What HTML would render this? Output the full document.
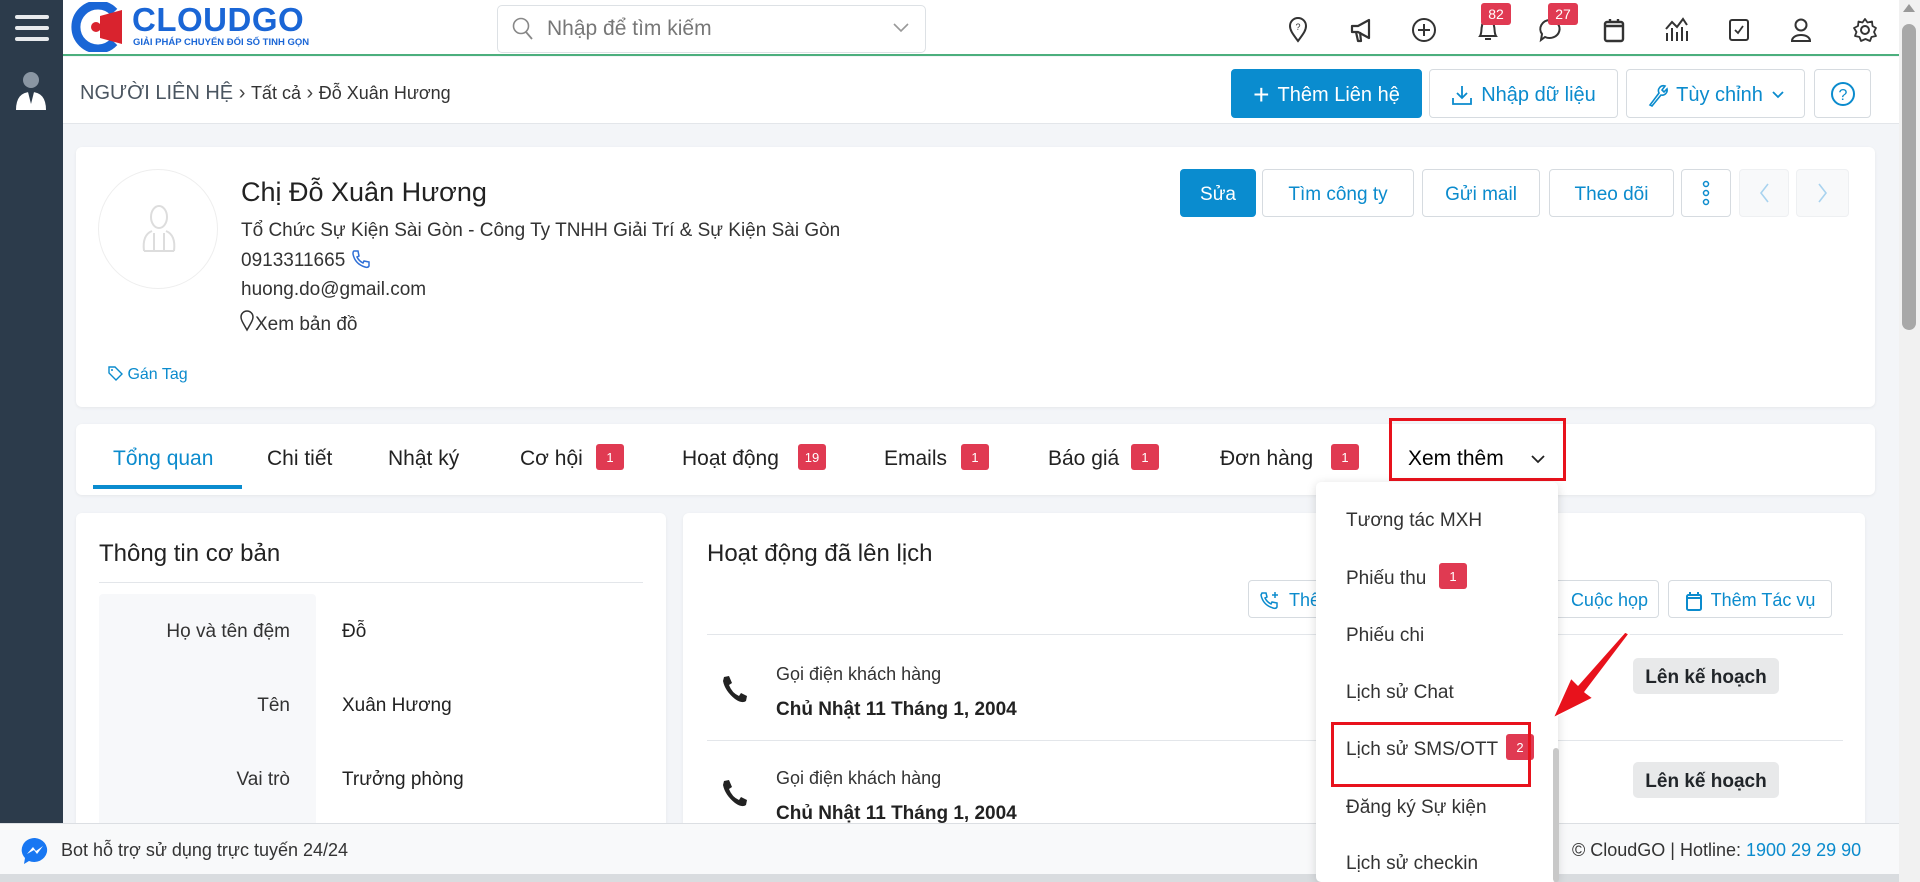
<!DOCTYPE html>
<html><head><meta charset="utf-8">
<style>
*{box-sizing:border-box;margin:0;padding:0}
body{width:1920px;height:882px;overflow:hidden;background:#f3f5f8;font-family:"Liberation Sans","Noto Sans CJK SC",sans-serif;color:#212529;position:relative}
.abs{position:absolute}
.side{left:0;top:0;width:63px;height:823px;background:#2c3b4b}
.hdr{left:63px;top:0;width:1836px;height:56px;background:#fff;border-bottom:2px solid #4caf7d}
.bc{left:63px;top:57px;width:1836px;height:67px;background:#fff;border-bottom:1px solid #e3e6ea}
.card{background:#fff;border-radius:6px;box-shadow:0 1px 3px rgba(0,0,0,.06)}
.btn{position:absolute;border:1px solid #d6dbe0;border-radius:4px;background:#fff;color:#0b8bcd;font-size:19px;display:flex;align-items:center;justify-content:center;gap:8px;padding-top:3px}
.btnp{background:#0a8ccf;color:#fff;border-color:#0a8ccf}
.badge{position:absolute;background:#e03a52;color:#fff;font-size:13px;border-radius:3px;width:28px;height:26px;display:flex;align-items:center;justify-content:center}
.tab{position:absolute;top:447px;font-size:21px;color:#222}
.ic{position:absolute;top:17px}
.dd{font-size:19px;color:#333;position:absolute;left:1346px}
</style></head><body>
<div class="abs side">
 <div class="abs" style="left:15px;top:15px;width:34px;height:4px;background:#e8eaed;border-radius:2px"></div>
 <div class="abs" style="left:15px;top:26px;width:34px;height:4px;background:#e8eaed;border-radius:2px"></div>
 <div class="abs" style="left:15px;top:37px;width:34px;height:4px;background:#e8eaed;border-radius:2px"></div>
 <svg class="abs" style="left:14px;top:70px" width="34" height="40" viewBox="0 0 34 40"><circle cx="17" cy="10" r="8" fill="#8a96a3"/><path d="M2 40 Q2 22 17 22 Q32 22 32 40Z" fill="#fff"/><path d="M14 22 L17 34 L20 22Z" fill="#2c3b4b"/></svg>
</div>
<div class="abs hdr"></div>
<!-- logo -->
<svg class="abs" style="left:70px;top:2px" width="56" height="50" viewBox="0 0 56 50"><path d="M44 10 A22 22 0 1 0 44 40" fill="none" stroke="#1a66d6" stroke-width="9"/><path d="M30 14 L52 8 L52 42 L30 36Z" fill="#d9232e"/><circle cx="26" cy="25" r="5" fill="#d9232e"/></svg>
<div class="abs" style="left:132px;top:1px;font-size:33px;font-weight:bold;color:#1a66d6;letter-spacing:0.5px">CLOUDGO</div>
<div class="abs" style="left:133px;top:37px;font-size:9.5px;font-weight:bold;color:#1a66d6">GIẢI PHÁP CHUYỂN ĐỔI SỐ TINH GỌN</div>
<!-- search -->
<div class="abs" style="left:497px;top:5px;width:429px;height:48px;border:1px solid #dde1e5;border-radius:5px;background:#fff"></div>
<svg class="abs" style="left:512px;top:17px" width="22" height="24" viewBox="0 0 22 24"><circle cx="9" cy="9" r="7.5" fill="none" stroke="#888" stroke-width="1.6"/><path d="M14 15 L20 22" stroke="#888" stroke-width="1.8"/></svg>
<div class="abs" style="left:547px;top:17px;font-size:21px;color:#777">Nhập để tìm kiếm</div>
<svg class="abs" style="left:892px;top:22px" width="18" height="12"><path d="M2 2 L9 9 L16 2" fill="none" stroke="#999" stroke-width="1.6"/></svg>
<!-- header icons -->
<svg class="ic" style="left:1286px" width="24" height="26" viewBox="0 0 24 26"><path d="M12 24 C6 16 4 13 4 9 A8 8 0 0 1 20 9 C20 13 18 16 12 24Z" fill="none" stroke="#333" stroke-width="2"/><text x="12" y="13" font-size="9" text-anchor="middle" fill="#333">?</text></svg>
<svg class="ic" style="left:1349px" width="26" height="26" viewBox="0 0 26 26"><path d="M3 9 H9 L20 3 V21 L9 15 H3Z M7 15 L9 24 H12 L11 15" fill="none" stroke="#333" stroke-width="2.2" stroke-linejoin="round"/></svg>
<svg class="ic" style="left:1411px" width="26" height="26" viewBox="0 0 26 26"><circle cx="13" cy="13" r="11" fill="none" stroke="#333" stroke-width="2"/><path d="M13 7 V19 M7 13 H19" stroke="#333" stroke-width="2"/></svg>
<svg class="ic" style="left:1475px" width="26" height="26" viewBox="0 0 26 26"><path d="M5 19 C7 16 6 12 7 9 A6 6 0 0 1 19 9 C20 12 19 16 21 19Z M10 22 H16" fill="none" stroke="#333" stroke-width="2"/></svg>
<svg class="ic" style="left:1537px" width="26" height="26" viewBox="0 0 26 26"><path d="M13 3 A10 9 0 1 1 8 20 L4 23 L5 17 A10 9 0 0 1 13 3Z" fill="none" stroke="#333" stroke-width="2"/></svg>
<svg class="ic" style="left:1602px" width="24" height="26" viewBox="0 0 24 26"><rect x="3" y="5" width="18" height="19" rx="2" fill="none" stroke="#333" stroke-width="2.4"/><path d="M3 9 H21 M8 2 V6 M16 2 V6" stroke="#333" stroke-width="2.4"/></svg>
<svg class="ic" style="left:1663px" width="26" height="26" viewBox="0 0 26 26"><path d="M3 12 L9 5 L14 10 L20 2 L24 8 M4 24 V16 M9 24 V11 M14 24 V15 M19 24 V10 M24 24 V14" fill="none" stroke="#333" stroke-width="2"/></svg>
<svg class="ic" style="left:1727px" width="24" height="26" viewBox="0 0 24 26"><rect x="3" y="3" width="18" height="20" rx="2" fill="none" stroke="#333" stroke-width="2"/><path d="M8 13 L11 16 L16 9" fill="none" stroke="#333" stroke-width="1.8"/></svg>
<svg class="ic" style="left:1789px" width="24" height="26" viewBox="0 0 24 26"><circle cx="12" cy="8" r="5.5" fill="none" stroke="#333" stroke-width="2"/><path d="M3 24 C3 16 21 16 21 24Z" fill="none" stroke="#333" stroke-width="2"/></svg>
<svg class="ic" style="left:1852px" width="26" height="26" viewBox="0 0 26 26"><circle cx="13" cy="13" r="4" fill="none" stroke="#333" stroke-width="2"/><path d="M13 2 L15.5 5.5 L20 4.5 L20.5 9 L24 11 L22 15 L24 19 L19.5 20 L18 24 L13.5 22 L9 24 L7.5 20 L3 19 L4.5 15 L2 11 L6 9 L6.5 4.5 L10.5 5.5Z" fill="none" stroke="#333" stroke-width="1.8" stroke-linejoin="round"/></svg>
<div class="badge" style="left:1481px;top:3px;width:30px;height:22px;font-size:14px">82</div>
<div class="badge" style="left:1548px;top:3px;width:30px;height:22px;font-size:14px">27</div>
<!-- scrollbar -->
<div class="abs" style="left:1899px;top:0;width:21px;height:882px;background:#f1f1f1"></div>
<div class="abs" style="left:1902px;top:24px;width:14px;height:306px;background:#a8a8a8;border-radius:7px"></div>
<div class="abs" style="left:1903px;top:4px;width:0;height:0;border-left:6px solid transparent;border-right:6px solid transparent;border-bottom:8px solid #999"></div>
<!-- breadcrumb -->
<div class="abs bc"></div>
<div class="abs" style="left:80px;top:82px;font-size:20px;color:#4a5560">NGƯỜI LIÊN HỆ <span style="color:#444">›</span> <span style="font-size:18px;color:#333">Tất cả</span> <span style="color:#444">›</span> <span style="font-size:18px;color:#333">Đỗ Xuân Hương</span></div>
<div class="btn btnp" style="left:1231px;top:69px;width:191px;height:49px;font-size:20px"><span style="font-size:28px;font-weight:300">+</span>Thêm Liên hệ</div>
<div class="btn" style="left:1429px;top:69px;width:189px;height:49px;font-size:20px"><svg width="22" height="22" viewBox="0 0 22 22"><path d="M11 2 V14 M6 9 L11 14 L16 9 M2 14 V20 H20 V14" fill="none" stroke="#0b8bcd" stroke-width="1.8"/></svg>Nhập dữ liệu</div>
<div class="btn" style="left:1626px;top:69px;width:179px;height:49px;font-size:20px"><svg width="22" height="24" viewBox="0 0 22 24"><path d="M4 22 L13 10 A5 5 0 0 1 19 3 L16 7 L18 9 L21 6 A5 5 0 0 1 15 12 L6 23Z" fill="none" stroke="#0b8bcd" stroke-width="1.6"/></svg>Tùy chỉnh <svg width="14" height="10"><path d="M2 2 L7 7 L12 2" fill="none" stroke="#0b8bcd" stroke-width="1.8"/></svg></div>
<div class="btn" style="left:1814px;top:69px;width:57px;height:49px;padding-top:0"><svg width="26" height="26" viewBox="0 0 26 26"><circle cx="13" cy="13" r="11" fill="none" stroke="#0b8bcd" stroke-width="2"/><text x="13" y="19" font-size="16" text-anchor="middle" fill="#0b8bcd" font-family="Liberation Sans">?</text></svg></div>
<!-- card 1 -->
<div class="abs card" style="left:76px;top:147px;width:1799px;height:260px"></div>
<div class="abs" style="left:98px;top:169px;width:120px;height:120px;border-radius:50%;border:1px solid #eee"></div>
<svg class="abs" style="left:138px;top:203px" width="42" height="52" viewBox="0 0 42 52"><ellipse cx="21" cy="14" rx="8" ry="11" fill="none" stroke="#ddd" stroke-width="2"/><path d="M6 48 Q4 32 14 28 M36 48 Q38 32 28 28 M6 48 H36 M16 30 V47 M26 30 V47" fill="none" stroke="#ddd" stroke-width="2"/></svg>
<div class="abs" style="left:241px;top:177px;font-size:27px;color:#222">Chị Đỗ Xuân Hương</div>
<div class="abs" style="left:241px;top:220px;font-size:19px;color:#333">Tổ Chức Sự Kiện Sài Gòn - Công Ty TNHH Giải Trí &amp; Sự Kiện Sài Gòn</div>
<div class="abs" style="left:241px;top:249px;font-size:19px;color:#333">0913311665 <svg width="20" height="20" viewBox="0 0 20 20" style="vertical-align:-3px"><path d="M3 2 L7 2 L8 7 L6 8 Q8 12 12 14 L13 12 L18 13 L18 17 Q17 19 14 18 Q4 15 2 5 Q2 2 3 2Z" fill="none" stroke="#2f6fd6" stroke-width="1.5"/></svg></div>
<div class="abs" style="left:241px;top:279px;font-size:19px;color:#333">huong.do@gmail.com</div>
<div class="abs" style="left:239px;top:310px;font-size:19px;color:#333"><svg width="16" height="22" viewBox="0 0 16 22" style="vertical-align:-2px"><path d="M8 20 C4 13 2 10 2 7 A6 6 0 0 1 14 7 C14 10 12 13 8 20Z" fill="none" stroke="#333" stroke-width="1.5"/></svg>Xem bản đồ</div>
<div class="abs" style="left:107px;top:365px;font-size:16px;color:#0b8bcd"><svg width="16" height="16" viewBox="0 0 16 16" style="vertical-align:-2px"><path d="M2 2 H8 L15 9 L9 15 L2 8Z" fill="none" stroke="#0b8bcd" stroke-width="1.4"/><circle cx="5" cy="5" r="1" fill="#0b8bcd"/></svg> Gán Tag</div>
<div class="btn btnp" style="left:1180px;top:169px;width:76px;height:48px">Sửa</div>
<div class="btn" style="left:1262px;top:169px;width:152px;height:48px">Tìm công ty</div>
<div class="btn" style="left:1422px;top:169px;width:118px;height:48px">Gửi mail</div>
<div class="btn" style="left:1549px;top:169px;width:125px;height:48px">Theo dõi</div>
<div class="btn" style="left:1681px;top:169px;width:50px;height:48px;padding-top:0"><svg width="8" height="26"><circle cx="4" cy="4" r="2.5" fill="none" stroke="#0b8bcd" stroke-width="1.5"/><circle cx="4" cy="13" r="2.5" fill="none" stroke="#0b8bcd" stroke-width="1.5"/><circle cx="4" cy="22" r="2.5" fill="none" stroke="#0b8bcd" stroke-width="1.5"/></svg></div>
<div class="btn" style="left:1739px;top:169px;width:50px;height:48px;background:#f8f9fa;border-color:#eef0f2;padding-top:0"><svg width="12" height="22"><path d="M10 2 L3 11 L10 20" fill="none" stroke="#a9d3ef" stroke-width="1.6"/></svg></div>
<div class="btn" style="left:1796px;top:169px;width:53px;height:48px;background:#f8f9fa;border-color:#eef0f2;padding-top:0"><svg width="12" height="22"><path d="M2 2 L9 11 L2 20" fill="none" stroke="#a9d3ef" stroke-width="1.6"/></svg></div>
<!-- tabs -->
<div class="abs card" style="left:76px;top:424px;width:1799px;height:71px"></div>
<div class="tab" style="left:113px;color:#0b8bcd">Tổng quan</div>
<div class="abs" style="left:93px;top:485px;width:149px;height:4px;background:#0a8ccf"></div>
<div class="tab" style="left:267px">Chi tiết</div>
<div class="tab" style="left:388px">Nhật ký</div>
<div class="tab" style="left:520px">Cơ hội</div><div class="badge" style="left:596px;top:444px">1</div>
<div class="tab" style="left:682px">Hoạt động</div><div class="badge" style="left:798px;top:444px">19</div>
<div class="tab" style="left:884px">Emails</div><div class="badge" style="left:961px;top:444px">1</div>
<div class="tab" style="left:1048px">Báo giá</div><div class="badge" style="left:1131px;top:444px">1</div>
<div class="tab" style="left:1220px">Đơn hàng</div><div class="badge" style="left:1331px;top:444px">1</div>
<div class="tab" style="left:1408px;color:#000">Xem thêm</div>
<svg class="abs" style="left:1530px;top:453px" width="16" height="12"><path d="M2 3 L8 9 L14 3" fill="none" stroke="#222" stroke-width="1.8"/></svg>
<div class="abs" style="left:1389px;top:418px;width:177px;height:63px;border:3px solid #e8121c"></div>
<!-- left card -->
<div class="abs card" style="left:76px;top:513px;width:590px;height:340px"></div>
<div class="abs" style="left:99px;top:540px;font-size:24px;color:#222">Thông tin cơ bản</div>
<div class="abs" style="left:99px;top:582px;width:544px;height:1px;background:#e3e6ea"></div>
<div class="abs" style="left:99px;top:594px;width:217px;height:240px;background:#f7f8fa;border-radius:4px"></div>
<div class="abs" style="left:99px;top:621px;width:191px;text-align:right;font-size:19px;color:#333">Họ và tên đệm</div>
<div class="abs" style="left:342px;top:621px;font-size:19px;color:#222">Đỗ</div>
<div class="abs" style="left:99px;top:695px;width:191px;text-align:right;font-size:19px;color:#333">Tên</div>
<div class="abs" style="left:342px;top:695px;font-size:19px;color:#222">Xuân Hương</div>
<div class="abs" style="left:99px;top:769px;width:191px;text-align:right;font-size:19px;color:#333">Vai trò</div>
<div class="abs" style="left:342px;top:769px;font-size:19px;color:#222">Trưởng phòng</div>
<!-- right card -->
<div class="abs card" style="left:683px;top:513px;width:1182px;height:340px"></div>
<div class="abs" style="left:707px;top:540px;font-size:24px;color:#222">Hoạt động đã lên lịch</div>
<div class="btn" style="left:1248px;top:580px;width:100px;height:38px;justify-content:flex-start;padding-left:10px;font-size:18px"><svg width="22" height="22" viewBox="0 0 22 22"><path d="M3 3 L7 3 L8 7 L6 8 Q8 12 12 14 L13 12 L18 13 L18 17 Q17 19 14 18 Q4 15 2 5Z" fill="none" stroke="#0b8bcd" stroke-width="1.5"/><path d="M16 2 V8 M13 5 H19" stroke="#0b8bcd" stroke-width="1.5"/></svg>Thêm</div>
<div class="btn" style="left:1520px;top:580px;width:139px;height:38px;justify-content:flex-end;padding-right:10px;font-size:18px">Cuộc họp</div>
<div class="btn" style="left:1668px;top:580px;width:164px;height:38px;font-size:18px"><svg width="18" height="22" viewBox="0 0 18 22"><rect x="2" y="5" width="14" height="15" rx="1.5" fill="none" stroke="#0b8bcd" stroke-width="2"/><path d="M2 8 H16 M5 2 V6 M13 2 V6" stroke="#0b8bcd" stroke-width="2"/></svg>Thêm Tác vụ</div>
<div class="abs" style="left:707px;top:634px;width:1136px;height:1px;background:#e3e6ea"></div>
<div class="abs" style="left:707px;top:740px;width:1136px;height:1px;background:#e3e6ea"></div>
<svg class="abs" style="left:720px;top:674px" width="28" height="30" viewBox="0 0 28 30"><path d="M4 3 L9 2 L12 9 L9 11 Q12 19 19 22 L21 19 L27 22 L26 27 Q22 30 15 25 Q5 17 3 7Z" fill="#222"/></svg>
<div class="abs" style="left:776px;top:664px;font-size:18px;color:#333">Gọi điện khách hàng</div>
<div class="abs" style="left:776px;top:699px;font-size:19px;font-weight:bold;color:#222">Chủ Nhật 11 Tháng 1, 2004</div>
<svg class="abs" style="left:720px;top:778px" width="28" height="30" viewBox="0 0 28 30"><path d="M4 3 L9 2 L12 9 L9 11 Q12 19 19 22 L21 19 L27 22 L26 27 Q22 30 15 25 Q5 17 3 7Z" fill="#222"/></svg>
<div class="abs" style="left:776px;top:768px;font-size:18px;color:#333">Gọi điện khách hàng</div>
<div class="abs" style="left:776px;top:803px;font-size:19px;font-weight:bold;color:#222">Chủ Nhật 11 Tháng 1, 2004</div>
<div class="abs" style="left:1633px;top:658px;width:146px;height:36px;background:#e8e9ea;border-radius:5px;font-size:19px;font-weight:bold;display:flex;align-items:center;justify-content:center;padding-top:3px">Lên kế hoạch</div>
<div class="abs" style="left:1633px;top:762px;width:146px;height:36px;background:#e8e9ea;border-radius:5px;font-size:19px;font-weight:bold;display:flex;align-items:center;justify-content:center;padding-top:3px">Lên kế hoạch</div>
<!-- footer -->
<div class="abs" style="left:0;top:823px;width:1899px;height:51px;background:#f8f9fa;border-top:1px solid #dcdfe3"></div>
<div class="abs" style="left:0;top:874px;width:1899px;height:8px;background:#d9dcdf"></div>
<svg class="abs" style="left:20px;top:836px" width="30" height="30" viewBox="0 0 30 30"><path d="M15 2 A13 12 0 1 1 9 25 L4 28 L5 22 A13 12 0 0 1 15 2Z" fill="#1877f2"/><path d="M7 18 L13 11 L16 15 L23 10 L17 18 L14 14Z" fill="#fff"/></svg>
<div class="abs" style="left:61px;top:840px;font-size:18px;color:#333">Bot hỗ trợ sử dụng trực tuyến 24/24</div>
<div class="abs" style="left:1572px;top:840px;font-size:18px;color:#333">© CloudGO | Hotline: <span style="color:#0b8bcd">1900 29 29 90</span></div>
<!-- dropdown -->
<div class="abs" style="left:1316px;top:482px;width:242px;height:400px;background:#fff;border-radius:5px;box-shadow:0 2px 10px rgba(0,0,0,.15)"></div>
<div class="abs" style="left:1553px;top:748px;width:6px;height:134px;background:#c8c8c8;border-radius:3px"></div>
<div class="dd" style="top:510px">Tương tác MXH</div>
<div class="dd" style="top:568px">Phiếu thu</div><div class="badge" style="left:1439px;top:563px">1</div>
<div class="dd" style="top:625px">Phiếu chi</div>
<div class="dd" style="top:682px">Lịch sử Chat</div>
<div class="dd" style="top:739px">Lịch sử SMS/OTT</div><div class="badge" style="left:1506px;top:734px">2</div>
<div class="dd" style="top:797px">Đăng ký Sự kiện</div>
<div class="dd" style="top:853px">Lịch sử checkin</div>
<div class="abs" style="left:1331px;top:722px;width:200px;height:65px;border:3px solid #e8121c"></div>
<!-- arrow -->
<svg class="abs" style="left:1545px;top:630px" width="95" height="95" viewBox="0 0 95 95"><path d="M84 4 L40 62 L48 68 L8 88 L26 48 L33 55 L80 2Z" fill="#e8121c" stroke="#fff" stroke-width="1.5" stroke-linejoin="round"/></svg>
</body></html>
